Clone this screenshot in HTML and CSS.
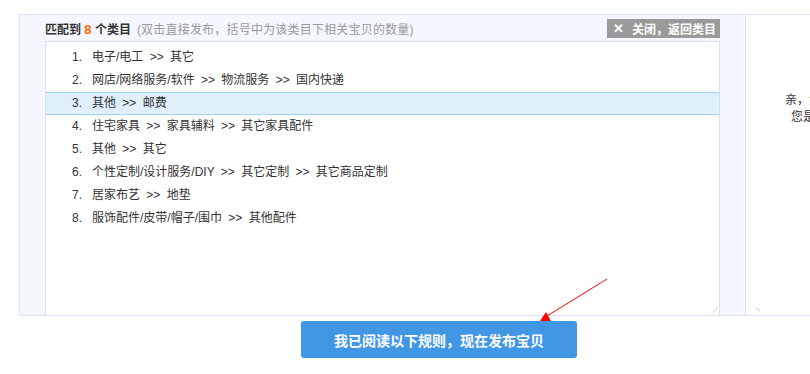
FILE: index.html
```html
<!DOCTYPE html>
<html lang="zh-CN">
<head>
    <meta charset="UTF-8">
    <title>选择类目</title>
    <link rel="stylesheet" href="styles.css">
</head>
<body>
    <div class="page">
        <div class="panel">
            <div class="match">
                <div class="match-head">
                    <span class="match-title">匹配到 <em>8</em> 个类目</span>
                    <span class="match-tip">(双击直接发布，括号中为该类目下相关宝贝的数量)</span>
                    <a class="close-btn" href="#"><span class="close-x">✕</span>关闭，返回类目</a>
                </div>
                <ol class="cat-list">
                    <li><span class="num">1.</span>电子/电工 &gt;&gt; 其它</li>
                    <li><span class="num">2.</span>网店/网络服务/软件 &gt;&gt; 物流服务 &gt;&gt; 国内快递</li>
                    <li class="active"><span class="num">3.</span>其他 &gt;&gt; 邮费</li>
                    <li><span class="num">4.</span>住宅家具 &gt;&gt; 家具辅料 &gt;&gt; 其它家具配件</li>
                    <li><span class="num">5.</span>其他 &gt;&gt; 其它</li>
                    <li><span class="num">6.</span>个性定制/设计服务/DIY &gt;&gt; 其它定制 &gt;&gt; 其它商品定制</li>
                    <li><span class="num">7.</span>居家布艺 &gt;&gt; 地垫</li>
                    <li><span class="num">8.</span>服饰配件/皮带/帽子/围巾 &gt;&gt; 其他配件</li>
                </ol>
            </div>
            <div class="side">
                <p>亲，没有找到匹配的类目</p>
                <p>您是否要发布以下类目</p>
            </div>
        </div>
        <div class="footer">
            <button class="publish-btn">我已阅读以下规则，现在发布宝贝</button>
        </div>

        <!-- annotation arrow -->
        <svg class="arrow" width="810" height="374" viewBox="0 0 810 374">
            <line x1="607" y1="279" x2="547" y2="316" stroke="#f00" stroke-width="1"/>
            <polygon points="546,312 540,321 551,321" fill="#f00"/>
            <path d="M713 313 L717 308 M756 308 L760 311" stroke="#ccc" stroke-width="1" fill="none"/>
        </svg>
    </div>
</body>
</html>
```

FILE: styles.css
```css
body {
    margin: 0;
    background: #fff;
    font-family: "Liberation Sans", "Noto Sans CJK SC", sans-serif;
    font-size: 12px;
    color: #333;
    overflow: hidden;
}
.page {
    width: 810px;
    height: 374px;
    overflow: hidden;
    padding-top: 14px;
    box-sizing: border-box;
}
.panel {
    display: flex;
    width: 1000px;
    height: 302px;
    margin-left: 19px;
    box-sizing: border-box;
    border-top: 1px solid #d8e3f6;
    border-left: 1px solid #d8e3f6;
    border-bottom: 1px solid #d8e3f6;
    background: #f4f8fe;
}
.match {
    width: 675px;
    padding: 0 25px;
    display: flex;
    flex-direction: column;
}
.match-head {
    display: flex;
    align-items: center;
    height: 26px;
}
.match-title {
    font-weight: bold;
    color: #333;
}
.match-title em {
    font-style: normal;
    color: #f60;
    font-size: 13px;
}
.match-tip {
    color: #999;
    margin-left: 6px;
    letter-spacing: 0.2px;
}
.close-btn {
    margin-left: auto;
    display: flex;
    align-items: center;
    height: 19px;
    padding: 0 4px 0 6px;
    background: #9a9a9a;
    color: #fff;
    text-decoration: none;
    font-weight: bold;
}
.close-x {
    font-size: 13px;
    margin-right: 8px;
}
.cat-list {
    flex: 1;
    list-style: none;
    margin: 0;
    padding: 4px 0 0;
    background: #fff;
    border: 1px solid #d4e1f5;
    border-bottom: none;
}
.cat-list li {
    height: 23px;
    line-height: 23px;
    padding-left: 20px;
    box-sizing: border-box;
    word-spacing: 3px;
}
.cat-list li.active {
    background: #dff0fb;
    border-top: 1px solid #9bd5f7;
    border-bottom: 1px solid #9bd5f7;
    line-height: 21px;
}
.num {
    display: inline-block;
    width: 16px;
    text-align: right;
    margin-right: 10px;
}
.side {
    width: 210px;
    background: #fff;
    border-left: 1px solid #d8e3f6;
    text-align: center;
    padding-top: 77px;
    color: #333;
}
.side p {
    margin: 0;
    line-height: 17px;
}
.footer {
    width: 878px;
    text-align: center;
    padding-top: 5px;
}
.publish-btn {
    width: 276px;
    height: 37px;
    border: none;
    border-radius: 3px;
    background: #4297e5;
    color: #fff;
    font-family: "Liberation Sans", "Noto Sans CJK SC", sans-serif;
    font-size: 14px;
    font-weight: bold;
    cursor: pointer;
}
.arrow {
    position: absolute;
    left: 0;
    top: 0;
    pointer-events: none;
}
```
